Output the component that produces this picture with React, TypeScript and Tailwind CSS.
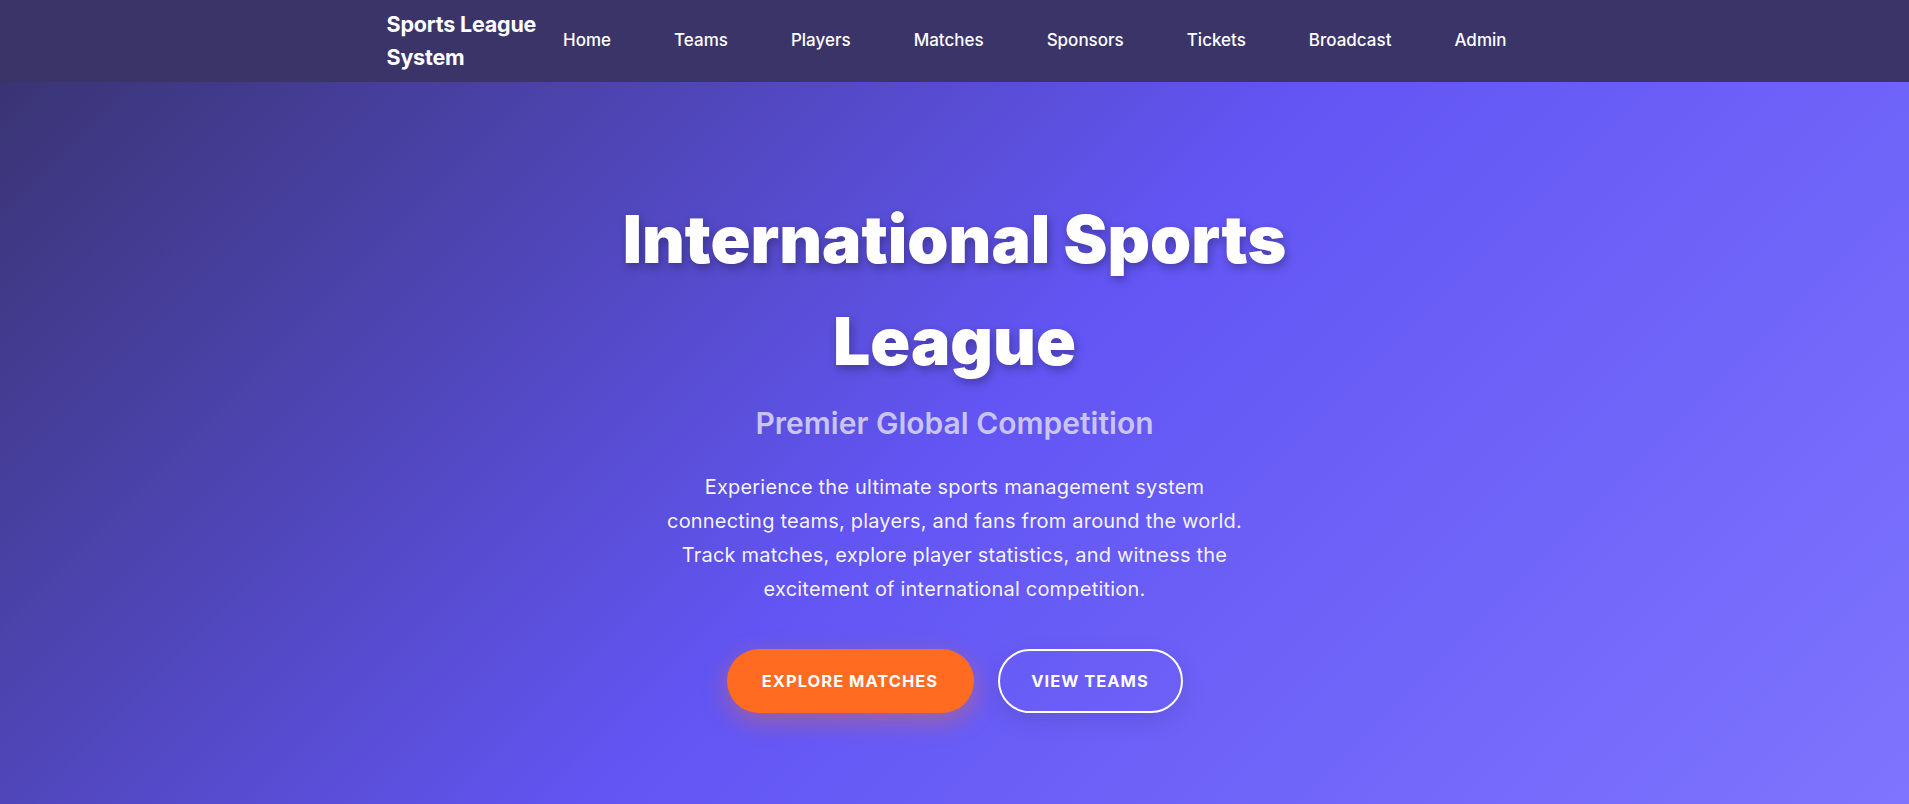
const navLinks = ["Home", "Teams", "Players", "Matches", "Sponsors", "Tickets", "Broadcast", "Admin"];

const App = () => {
  return (
    <div className="min-h-screen font-['Inter',sans-serif] text-white">
      {/* top navigation */}
      <header className="bg-[#3b3468] shadow-[0_2px_10px_rgba(0,0,0,0.15)]">
        <div className="mx-auto flex h-[82px] max-w-[1200px] items-center px-8">
          <div className="w-[161px] text-[21.5px] font-bold leading-[33px] tracking-[-0.2px]">
            Sports League
            <br />
            System
          </div>
          <nav className="flex items-center gap-[31px]">
            {navLinks.map((link) => (
              <a key={link} href="#" className="px-4 text-[17px] font-medium text-white">
                {link}
              </a>
            ))}
          </nav>
        </div>
      </header>

      {/* hero */}
      <section className="flex min-h-[722px] flex-col items-center bg-[linear-gradient(135deg,#3a3474_0%,#6255f4_50%,#7e74fe_100%)] px-8 pt-[106px] text-center">
        <h1 className="text-[66px] font-black leading-[102px] [text-shadow:2px_4px_10px_rgba(0,0,0,0.3)]">
          International Sports
          <br />
          League
        </h1>
        <h2 className="mt-[9px] text-[30px] font-semibold leading-[45px] text-[#c9c4f2]">
          Premier Global Competition
        </h2>
        <p className="mt-6 text-[20px] leading-[34px] tracking-[0.2px] text-white/95">
          Experience the ultimate sports management system
          <br />
          connecting teams, players, and fans from around the world.
          <br />
          Track matches, explore player statistics, and witness the
          <br />
          excitement of international competition.
        </p>
        <div className="mt-[43px] flex items-center gap-6">
          <button className="h-16 w-[247px] rounded-full bg-[#ff6b20] text-[16.5px] font-bold uppercase tracking-[1px] shadow-[0_8px_25px_rgba(255,107,32,0.4)]">
            Explore Matches
          </button>
          <button className="h-16 w-[185px] rounded-full border-2 border-white text-[16.5px] font-bold uppercase tracking-[1px] shadow-[0_8px_25px_rgba(0,0,0,0.1)]">
            View Teams
          </button>
        </div>
      </section>
    </div>
  );
};

export default App;
